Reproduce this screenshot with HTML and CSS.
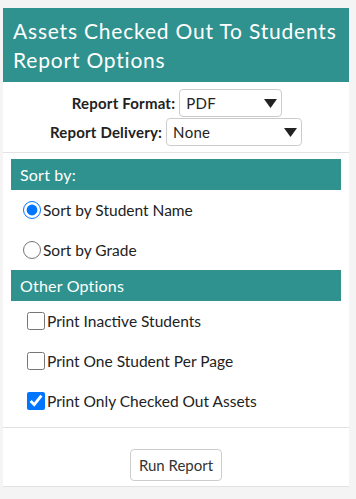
FILE: index.html
```html
<!DOCTYPE html>
<html>
<head>
<meta charset="utf-8">
<link rel="stylesheet" href="styles.css">
</head>
<body>
<div class="card">
  <div class="header">Assets Checked Out To Students Report Options</div>
  <div class="format">
    <div class="frow">
      <label class="flabel">Report Format:</label>
      <div class="sel sel-format">
        <span class="sel-text">PDF</span>
        <svg class="arrow" width="13" height="9" viewBox="0 0 13 9"><path d="M0 0H13L6.5 9Z" fill="#222"/></svg>
      </div>
    </div>
    <div class="frow">
      <label class="flabel">Report Delivery:</label>
      <div class="sel sel-delivery">
        <span class="sel-text">None</span>
        <svg class="arrow" width="13" height="9" viewBox="0 0 13 9"><path d="M0 0H13L6.5 9Z" fill="#222"/></svg>
      </div>
    </div>
  </div>
  <div class="section">
    <div class="bar">Sort by:</div>
    <label class="opt radio-opt"><input type="radio" name="sort" checked>Sort by Student Name</label>
    <label class="opt radio-opt"><input type="radio" name="sort">Sort by Grade</label>
    <div class="bar">Other Options</div>
    <label class="opt check-opt"><input type="checkbox">Print Inactive Students</label>
    <label class="opt check-opt"><input type="checkbox">Print One Student Per Page</label>
    <label class="opt check-opt"><input type="checkbox" checked>Print Only Checked Out Assets</label>
  </div>
  <div class="footer">
    <button class="run">Run Report</button>
  </div>
</div>
</body>
</html>
```
FILE: styles.css
```css
html, body {
  background: #f4f4f4;
}
body {
  margin: 8px 7px 0 3px;
  font-family: "Lato", "Open Sans", sans-serif;
  color: #222;
}
.card {
  background: #fff;
  border-bottom: 1px solid #e2e2e2;
}
.header {
  background: #2f928e;
  color: #fff;
  font-size: 21px;
  line-height: 29px;
  letter-spacing: 0.8px;
  padding: 8px 10px 8px 10px;
}
.format {
  display: flex;
  flex-direction: column;
  align-items: center;
  gap: 1px;
  padding: 7px 0 6px;
  border-bottom: 1px solid #e2e2e2;
}
.frow {
  display: flex;
  align-items: center;
  gap: 4px;
}
.frow:first-child { margin-left: 2px; }
.flabel {
  font-weight: bold;
  font-size: 15px;
  letter-spacing: 0.2px;
}
.sel {
  position: relative;
  box-sizing: border-box;
  height: 28px;
  border: 1px solid #ccc;
  border-radius: 4px;
  display: flex;
  align-items: center;
  padding-left: 6px;
  font-size: 15px;
  letter-spacing: 0.3px;
}
.sel-format { width: 103px; }
.sel-delivery { width: 136px; }
.arrow {
  position: absolute;
  right: 4px;
  top: 9px;
}
.section {
  padding: 6px 8px 6px;
  border-bottom: 1px solid #e2e2e2;
}
.bar {
  background: #2f928e;
  color: #fff;
  font-size: 16px;
  letter-spacing: 0.2px;
  height: 31px;
  line-height: 31px;
  padding-left: 9px;
}
.opt {
  display: flex;
  align-items: center;
  height: 40px;
  font-size: 15.5px;
}
.opt input {
  width: 18px;
  height: 18px;
  margin: 0 2px 0 0;
}
.radio-opt { padding-left: 12px; }
.check-opt { padding-left: 16px; }
.footer {
  display: flex;
  justify-content: center;
  padding: 21px 0 5px;
}
.run {
  font-family: inherit;
  font-size: 15px;
  color: #333;
  background: #fff;
  border: 1px solid #ccc;
  border-radius: 4px;
  width: 92px;
  height: 32px;
  padding: 0;
}
```
